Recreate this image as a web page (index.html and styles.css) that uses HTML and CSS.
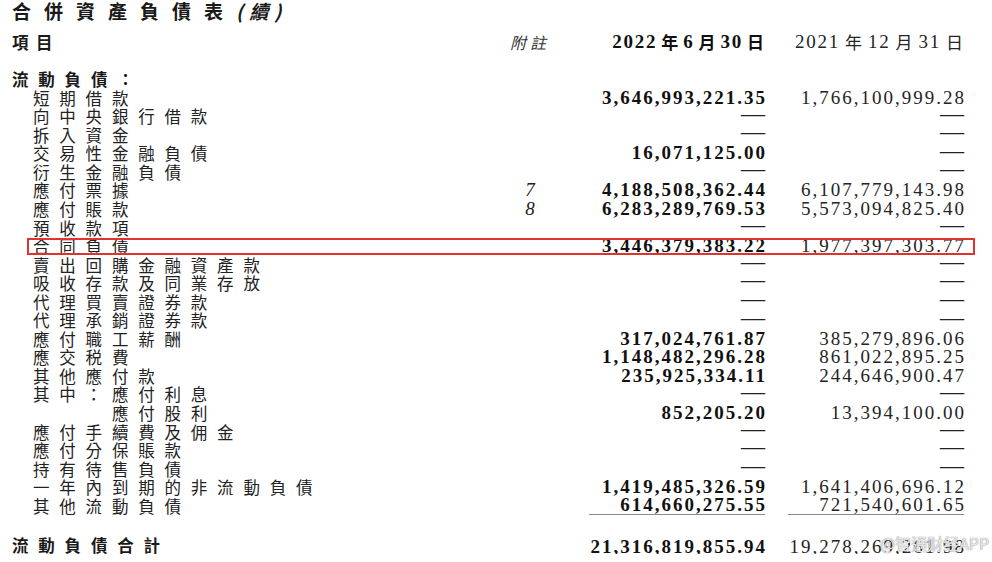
FILE: index.html
```html
<!DOCTYPE html>
<html lang="zh-Hant">
<head>
<meta charset="utf-8">
<title>合併資產負債表（續）</title>
<link rel="stylesheet" href="styles.css">
</head>
<body>
<div class="sheet">
  <h1 class="title">合併資產負債表<span class="cont">(續)</span></h1>

  <div class="row head">
    <div class="label">項目</div>
    <div class="note">附註</div>
    <div class="amt a1"><span class="d">2022</span><span class="cj">年</span><span class="d">6</span><span class="cj">月</span><span class="d">30</span><span class="cj">日</span></div>
    <div class="amt a2"><span class="d">2021</span><span class="cj">年</span><span class="d">12</span><span class="cj">月</span><span class="d">31</span><span class="cj">日</span></div>
  </div>

  <div class="row section"><div class="label">流動負債：</div></div>

  <div class="row"><div class="label">短期借款</div><div class="note"></div><div class="amt a1"><span class="v">3,646,993,221.35</span></div><div class="amt a2"><span class="v">1,766,100,999.28</span></div></div>
  <div class="row"><div class="label">向中央銀行借款</div><div class="note"></div><div class="amt a1"><span class="nil">—</span></div><div class="amt a2"><span class="nil">—</span></div></div>
  <div class="row"><div class="label">拆入資金</div><div class="note"></div><div class="amt a1"><span class="nil">—</span></div><div class="amt a2"><span class="nil">—</span></div></div>
  <div class="row"><div class="label">交易性金融負債</div><div class="note"></div><div class="amt a1"><span class="v">16,071,125.00</span></div><div class="amt a2"><span class="nil">—</span></div></div>
  <div class="row"><div class="label">衍生金融負債</div><div class="note"></div><div class="amt a1"><span class="nil">—</span></div><div class="amt a2"><span class="nil">—</span></div></div>
  <div class="row"><div class="label">應付票據</div><div class="note">7</div><div class="amt a1"><span class="v">4,188,508,362.44</span></div><div class="amt a2"><span class="v">6,107,779,143.98</span></div></div>
  <div class="row"><div class="label">應付賬款</div><div class="note">8</div><div class="amt a1"><span class="v">6,283,289,769.53</span></div><div class="amt a2"><span class="v">5,573,094,825.40</span></div></div>
  <div class="row"><div class="label">預收款項</div><div class="note"></div><div class="amt a1"><span class="nil">—</span></div><div class="amt a2"><span class="nil">—</span></div></div>
  <div class="row hl"><div class="label">合同負債</div><div class="note"></div><div class="amt a1"><span class="v">3,446,379,383.22</span></div><div class="amt a2"><span class="v">1,977,397,303.77</span></div></div>
  <div class="row"><div class="label">賣出回購金融資產款</div><div class="note"></div><div class="amt a1"><span class="nil">—</span></div><div class="amt a2"><span class="nil">—</span></div></div>
  <div class="row"><div class="label">吸收存款及同業存放</div><div class="note"></div><div class="amt a1"><span class="nil">—</span></div><div class="amt a2"><span class="nil">—</span></div></div>
  <div class="row"><div class="label">代理買賣證券款</div><div class="note"></div><div class="amt a1"><span class="nil">—</span></div><div class="amt a2"><span class="nil">—</span></div></div>
  <div class="row"><div class="label">代理承銷證券款</div><div class="note"></div><div class="amt a1"><span class="nil">—</span></div><div class="amt a2"><span class="nil">—</span></div></div>
  <div class="row"><div class="label">應付職工薪酬</div><div class="note"></div><div class="amt a1"><span class="v">317,024,761.87</span></div><div class="amt a2"><span class="v">385,279,896.06</span></div></div>
  <div class="row"><div class="label">應交税費</div><div class="note"></div><div class="amt a1"><span class="v">1,148,482,296.28</span></div><div class="amt a2"><span class="v">861,022,895.25</span></div></div>
  <div class="row"><div class="label">其他應付款</div><div class="note"></div><div class="amt a1"><span class="v">235,925,334.11</span></div><div class="amt a2"><span class="v">244,646,900.47</span></div></div>
  <div class="row"><div class="label">其中：應付利息</div><div class="note"></div><div class="amt a1"><span class="nil">—</span></div><div class="amt a2"><span class="nil">—</span></div></div>
  <div class="row"><div class="label sub">應付股利</div><div class="note"></div><div class="amt a1"><span class="v">852,205.20</span></div><div class="amt a2"><span class="v">13,394,100.00</span></div></div>
  <div class="row"><div class="label">應付手續費及佣金</div><div class="note"></div><div class="amt a1"><span class="nil">—</span></div><div class="amt a2"><span class="nil">—</span></div></div>
  <div class="row"><div class="label">應付分保賬款</div><div class="note"></div><div class="amt a1"><span class="nil">—</span></div><div class="amt a2"><span class="nil">—</span></div></div>
  <div class="row"><div class="label">持有待售負債</div><div class="note"></div><div class="amt a1"><span class="nil">—</span></div><div class="amt a2"><span class="nil">—</span></div></div>
  <div class="row"><div class="label">一年內到期的非流動負債</div><div class="note"></div><div class="amt a1"><span class="v">1,419,485,326.59</span></div><div class="amt a2"><span class="v">1,641,406,696.12</span></div></div>
  <div class="row last"><div class="label">其他流動負債</div><div class="note"></div><div class="amt a1"><span class="v">614,660,275.55</span></div><div class="amt a2"><span class="v">721,540,601.65</span></div></div>

  <div class="row total"><div class="label">流動負債合計</div><div class="note"></div><div class="amt a1"><span class="v">21,316,819,855.94</span></div><div class="amt a2"><span class="v">19,278,269,261.98</span></div>
    <div class="watermark">@智通财经APP</div>
  </div>
</div>
</body>
</html>
```

FILE: styles.css
```css
html, body {
  margin: 0;
  padding: 0;
  background: #ffffff;
}

body {
  font-family: "Noto Sans CJK TC", "Noto Sans CJK SC", "Noto Sans", sans-serif;
  color: #222;
  overflow: hidden;
}

.sheet {
  padding-left: 12px;
  width: 980px;
  box-sizing: border-box;
}

.title {
  margin: 0;
  height: 22px;
  line-height: 22px;
  font-size: 19px;
  font-weight: 700;
  letter-spacing: 13px;
  color: #1a1a1a;
  white-space: nowrap;
}

.title .cont {
  font-style: italic;
  letter-spacing: 6px;
}

.row {
  display: flex;
  align-items: center;
  height: 18.55px;
  position: relative;
}

.label {
  flex: 0 0 488px;
  box-sizing: border-box;
  padding-left: 21px;
  font-size: 16.5px;
  line-height: 18.55px;
  letter-spacing: 9.8px;
  white-space: nowrap;
  color: #222;
}

.label.sub {
  padding-left: 100px;
}

.note {
  flex: 0 0 60px;
  text-align: center;
  font-family: "Liberation Serif", serif;
  font-style: italic;
  font-size: 19px;
  line-height: 18.55px;
  color: #222;
}

.amt {
  flex: 0 0 176px;
  height: 18.55px;
  display: flex;
  align-items: center;
  justify-content: flex-end;
  font-family: "Liberation Serif", serif;
  font-size: 19px;
  line-height: 18.55px;
  letter-spacing: 2px;
  white-space: nowrap;
}

.amt.a1 {
  margin-left: 29px;
  font-weight: 700;
  color: #111;
}

.amt.a2 {
  margin-left: 23px;
  color: #242424;
}

.amt .v {
  margin-right: -2px;
}

.nil {
  font-size: 24px;
  line-height: 10px;
  letter-spacing: 0;
  font-weight: 400;
  color: #222;
  transform: translateY(-4px);
  display: inline-block;
}

/* header */
.row.head {
  margin-top: 10px;
  height: 20px;
}

.row.head .label {
  padding-left: 0;
  font-weight: 700;
  letter-spacing: 7.5px;
  color: #1a1a1a;
}

.row.head .note {
  font-family: "Noto Sans CJK TC", sans-serif;
  font-size: 16px;
  letter-spacing: 4px;
  font-weight: 400;
  color: #333;
  padding-right: 2px;
}

.row.head .amt {
  letter-spacing: 1.75px;
}

.row.head .amt .cj {
  font-family: "Noto Sans CJK TC", sans-serif;
  font-size: 17px;
  font-weight: 400;
  letter-spacing: 0;
  margin: 0 5px 0 4px;
}

.row.head .amt.a2 .cj {
  margin: 0 6px 0 5px;
}

.row.head .amt.a1 .cj {
  font-weight: 700;
}

.row.head .amt .cj:last-child {
  margin-right: 3px;
}

/* section */
.row.section {
  margin-top: 18.2px;
}

.row.section .label,
.row.total .label {
  padding-left: 0;
  font-weight: 700;
  color: #1a1a1a;
}

/* underline below last item */
.row.last .amt {
  border-bottom: 1px solid #8a8a8a;
  height: 18.55px;
  box-sizing: border-box;
}

/* total */
.row.total {
  margin-top: 20.3px;
}

.row.total .amt {
  height: 21px;
  padding-top: 2.4px;
  box-sizing: border-box;
  border-bottom: 1.5px solid #2a2a2a;
  align-self: flex-start;
}

/* highlight box */
.row.hl::after {
  content: "";
  position: absolute;
  left: 15px;
  right: 5px;
  top: 1px;
  bottom: 1px;
  border: 2px solid #e2322e;
  pointer-events: none;
}

/* watermark */
.watermark {
  position: absolute;
  left: 868px;
  top: -3px;
  font-family: "Noto Sans CJK SC", sans-serif;
  font-size: 16px;
  line-height: 20px;
  letter-spacing: 0;
  color: rgba(255, 255, 255, 0.75);
  text-shadow: 0 0 1px #9a9a9a, 0 0 1px #9a9a9a;
  white-space: nowrap;
}
```
